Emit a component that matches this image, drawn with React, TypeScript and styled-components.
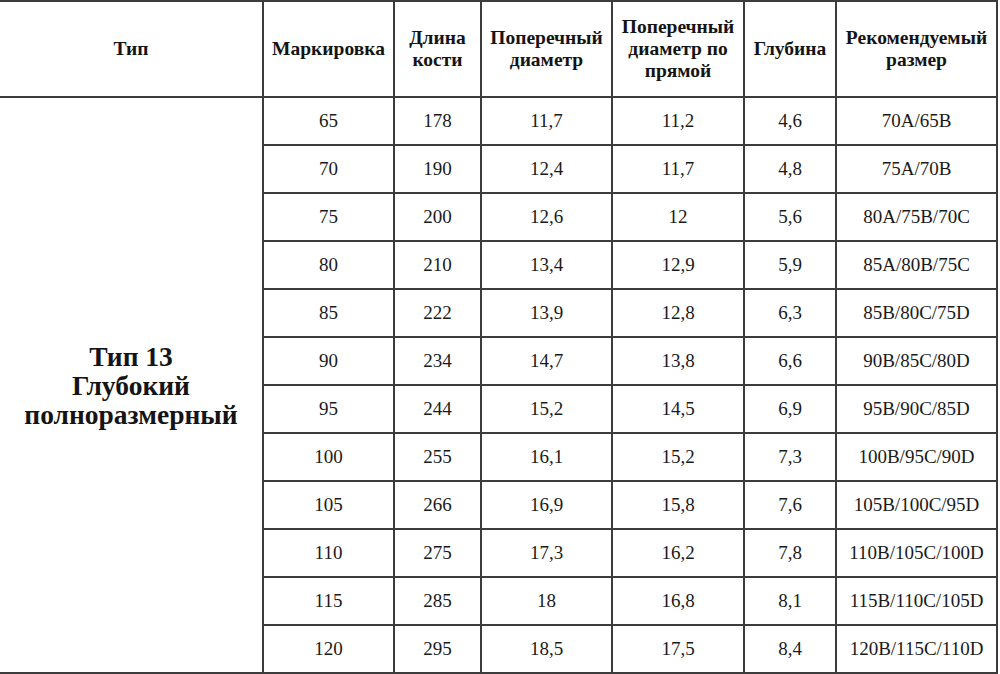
import React from "react";
import styled, { createGlobalStyle } from "styled-components";

const Global = createGlobalStyle`
  html, body { margin: 0; padding: 0; background: #fff; }
  body { font-family: "Liberation Serif", "Times New Roman", serif; color: #141414; }
`;

const Table = styled.table`
  border-collapse: collapse;
  table-layout: fixed;
  width: 997px;
  font-family: "Liberation Serif", "Times New Roman", serif;
`;

const HeadRow = styled.tr`
  height: 96px;
`;

const BodyRow = styled.tr`
  height: 48px;
`;

const HeadCell = styled.th<{ $first?: boolean }>`
  border: 2px solid #3c3c3c;
  border-left: ${(p) => (p.$first ? "none" : "2px solid #3c3c3c")};
  padding: 0 3px;
  font-size: 19.5px;
  font-weight: bold;
  line-height: 22px;
  text-align: center;
  vertical-align: middle;
  color: #141414;
`;

const Cell = styled.td`
  border: 2px solid #3c3c3c;
  padding: 0 3px;
  font-size: 19px;
  text-align: center;
  vertical-align: middle;
  color: #1a1a1a;
`;

const TypeCell = styled.td`
  border: 2px solid #3c3c3c;
  border-left: none;
  padding: 0 4px;
  font-size: 27.5px;
  font-weight: bold;
  line-height: 29px;
  text-align: center;
  vertical-align: middle;
  color: #141414;
`;

const widths = [263, 131, 87, 131, 132, 92, 161];

const headers = [
  "Тип",
  "Маркировка",
  "Длина кости",
  "Поперечный диаметр",
  "Поперечный диаметр по прямой",
  "Глубина",
  "Рекомендуемый размер",
];

const rows: string[][] = [
  ["65", "178", "11,7", "11,2", "4,6", "70A/65B"],
  ["70", "190", "12,4", "11,7", "4,8", "75A/70B"],
  ["75", "200", "12,6", "12", "5,6", "80A/75B/70C"],
  ["80", "210", "13,4", "12,9", "5,9", "85A/80B/75C"],
  ["85", "222", "13,9", "12,8", "6,3", "85B/80C/75D"],
  ["90", "234", "14,7", "13,8", "6,6", "90B/85C/80D"],
  ["95", "244", "15,2", "14,5", "6,9", "95B/90C/85D"],
  ["100", "255", "16,1", "15,2", "7,3", "100B/95C/90D"],
  ["105", "266", "16,9", "15,8", "7,6", "105B/100C/95D"],
  ["110", "275", "17,3", "16,2", "7,8", "110B/105C/100D"],
  ["115", "285", "18", "16,8", "8,1", "115B/110C/105D"],
  ["120", "295", "18,5", "17,5", "8,4", "120B/115C/110D"],
];

export default function App() {
  return (
    <>
      <Global />
      <Table>
        <colgroup>
          {widths.map((w, i) => (
            <col key={i} style={{ width: w }} />
          ))}
        </colgroup>
        <thead>
          <HeadRow>
            {headers.map((h, i) => (
              <HeadCell key={i} $first={i === 0}>
                {h}
              </HeadCell>
            ))}
          </HeadRow>
        </thead>
        <tbody>
          {rows.map((r, ri) => (
            <BodyRow key={ri}>
              {ri === 0 && (
                <TypeCell rowSpan={rows.length}>
                  Тип 13
                  <br />
                  Глубокий
                  <br />
                  полноразмерный
                </TypeCell>
              )}
              {r.map((v, ci) => (
                <Cell key={ci}>{v}</Cell>
              ))}
            </BodyRow>
          ))}
        </tbody>
      </Table>
    </>
  );
}
